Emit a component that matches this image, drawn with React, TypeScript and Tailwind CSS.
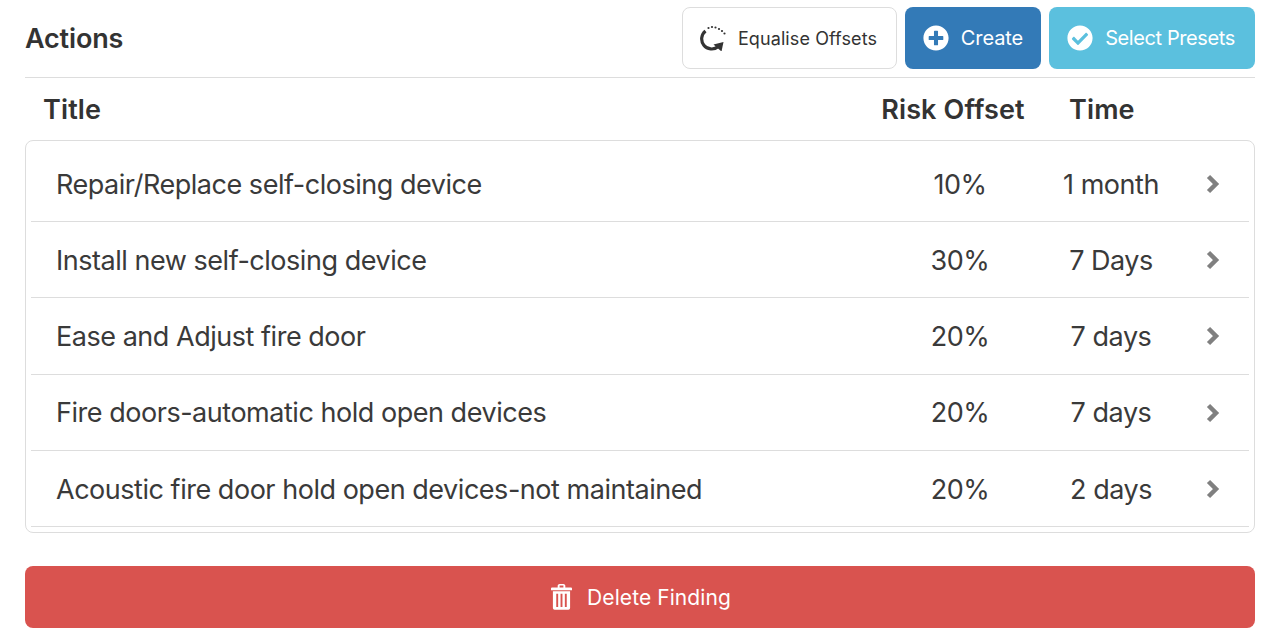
import { FaCheckCircle, FaPlusCircle } from 'react-icons/fa'

const actions = [
  { title: 'Repair/Replace self-closing device', offset: '10%', time: '1 month' },
  { title: 'Install new self-closing device', offset: '30%', time: '7 Days' },
  { title: 'Ease and Adjust fire door', offset: '20%', time: '7 days' },
  { title: 'Fire doors-automatic hold open devices', offset: '20%', time: '7 days' },
  { title: 'Acoustic fire door hold open devices-not maintained', offset: '20%', time: '2 days' },
]

function EqualiseIcon() {
  return (
    <svg width="26" height="26" viewBox="0 0 26 26" fill="none" stroke="#333">
      <path d="M5.500 6A10 10 0 0 0 18 21.800" strokeWidth="3.200" />
      <path d="M23.500 17L13.500 19.500L21.500 26.500z" fill="#333" stroke="none" />
      <path d="M8.500 3v.01M12 2v.01M15.500 2.500v.01M19 4v.01M22 6v.01M24.500 8.500v.01" strokeWidth="2.200" strokeLinecap="round" />
    </svg>
  )
}

function TrashIcon() {
  return (
    <svg width="21" height="27" viewBox="0 0 22 28" fill="white">
      <path fillRule="evenodd" d="M7 4.500V2.500A2 2 0 0 1 9 .8h4a2 2 0 0 1 2 1.700v2H21a1 1 0 0 1 1 1v2H0v-2a1 1 0 0 1 1-1zM9 2.600v1.900h4V2.600z" />
      <path fillRule="evenodd" d="M2 8.500h18V26a1.800 1.800 0 0 1-1.800 1.800H3.800A1.800 1.800 0 0 1 2 26zM5.500 11v14h2V11zM10 11v14h2V11zM14.500 11v14h2V11z" />
    </svg>
  )
}

function Chevron() {
  return (
    <svg width="14" height="20" viewBox="0 0 14 20" fill="none" stroke="#808080" strokeWidth="4.500">
      <path d="M2.500 2.500L10 10l-7.500 7.500" />
    </svg>
  )
}

export default function App() {
  return (
    <div className="h-[643px] w-[1280px] overflow-hidden bg-white px-[25px] pt-[7px] font-['Inter','Liberation_Sans',sans-serif] text-[#333]">
      <div className="flex h-[62px] items-center justify-between">
        <h2 className="pt-[3px] text-[27px] font-semibold tracking-[-0.17px]">Actions</h2>
        <div className="flex gap-2">
          <button className="flex h-[62px] w-[215px] items-center justify-center gap-3 rounded-lg border border-[#ddd] pr-[2px] text-[18px] tracking-[0.1px]">
            <EqualiseIcon />
            Equalise Offsets
          </button>
          <button className="flex h-[62px] w-[136px] items-center justify-center gap-3 rounded-lg bg-[#337ab7] text-[20px] tracking-[-0.1px] text-white">
            <FaPlusCircle className="text-[26px]" />
            Create
          </button>
          <button className="flex h-[62px] w-[206px] items-center justify-center gap-3 rounded-lg bg-[#5bc0de] pr-[2px] text-[20px] tracking-[-0.4px] text-white">
            <FaCheckCircle className="text-[26px]" />
            Select Presets
          </button>
        </div>
      </div>

      <div className="mt-2 border-t border-[#ddd]" />

      <div className="flex h-[62px] items-center pt-[3px] text-[27px] font-semibold tracking-[0.13px]">
        <div className="flex-1 pl-[18px]">Title</div>
        <div className="w-[144px] text-center">Risk Offset</div>
        <div className="ml-[44px] w-[64px] text-center">Time</div>
        <div className="w-[122px]" />
      </div>

      <div className="h-[393px] overflow-hidden rounded-lg border border-[#ddd] px-[5px] pt-[5px]">
        {actions.map(action => (
          <div key={action.title} className="flex h-[76.2px] items-center border-b border-[#ddd] pt-[3px] text-[27px] tracking-[-0.47px] text-[#3a3a3a]">
            <div className="flex-1 pl-[25px]">{action.title}</div>
            <div className="w-[100px] text-center">{action.offset}</div>
            <div className="ml-[51px] w-[100px] text-center">{action.time}</div>
            <div className="ml-[15px] flex w-[73px] -translate-y-[1px] justify-center">
              <Chevron />
            </div>
          </div>
        ))}
      </div>

      <button className="mt-[33px] flex h-[62px] w-full items-center justify-center gap-[15px] rounded-lg bg-[#d9534f] pl-[2px] text-[21px] tracking-[0.08px] text-white">
        <span className="-translate-y-[1px]">
          <TrashIcon />
        </span>
        <span className="pt-[2px]">Delete Finding</span>
      </button>
    </div>
  )
}
